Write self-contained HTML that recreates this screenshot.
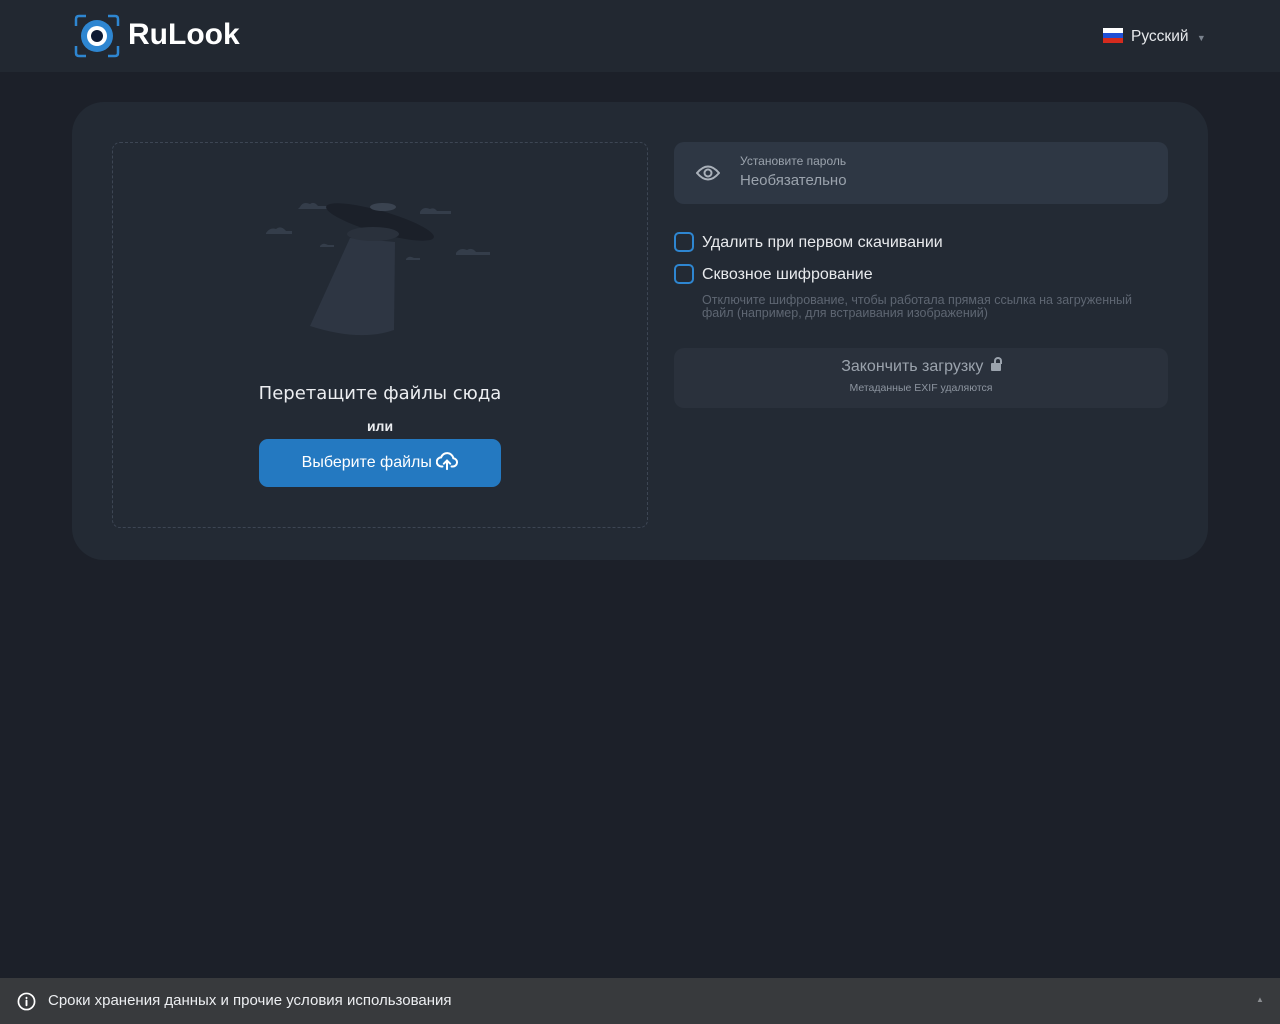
<!DOCTYPE html>
<html><head><meta charset="utf-8"><style>
*{box-sizing:border-box;margin:0;padding:0}
body{width:1280px;height:1024px;background:#1c2029;font-family:"Liberation Sans","DejaVu Sans",sans-serif;position:relative;overflow:hidden;color:#fff}
.hdr{position:absolute;left:0;top:0;width:1280px;height:72px;background:#222831}
.logo{position:absolute;left:74px;top:14px}
.brand{position:absolute;left:128px;top:18px;font-size:30px;font-weight:bold;color:#fff}
.lang{position:absolute;left:1103px;top:28px;font-size:15.5px;color:#e6e8eb}
.card{position:absolute;left:72px;top:102px;width:1136px;height:458px;background:#232a34;border-radius:32px}
.drop{position:absolute;left:112px;top:142px;width:536px;height:386px;border:1px dashed #3d4654;border-radius:8px}
.pw{position:absolute;left:674px;top:142px;width:494px;height:62px;background:#2e3744;border-radius:10px}
.cb{position:absolute;left:674px;width:20px;height:20px;border:2px solid #2e86d1;border-radius:5px}
.lbl{position:absolute;left:702px;font-size:16px;color:#e8eaed}
.fin{position:absolute;left:674px;top:348px;width:494px;height:60px;background:#2a313c;border-radius:10px;text-align:center}
.foot{position:absolute;left:0;top:978px;width:1280px;height:46px;background:#383a3d}
</style></head><body>
<div class="hdr">
 <svg class="logo" width="46" height="44" viewBox="0 0 46 44">
  <path d="M2 12V5Q2 2 5 2h7M34 2h7q3 0 3 3v7M44 32v7q0 3-3 3h-7M12 42H5q-3 0-3-3v-7" stroke="#2e86d1" stroke-width="2.5" fill="none"/>
  <circle cx="23" cy="22" r="16" fill="#2e86d1"/><circle cx="23" cy="22" r="10" fill="#fff"/><circle cx="23" cy="22" r="6" fill="#0e1a33"/>
 </svg>
 <div class="brand">RuLook</div>
 <div class="lang"><span style="display:inline-block;width:20px;height:15px;vertical-align:-2px;margin-right:8px;background:linear-gradient(#fff 0 33%,#1f4fd6 33% 66%,#d52b1e 66%)"></span>Русский <span style="color:#7a828d;font-size:9px;margin-left:4px">▼</span></div>
</div>
<div class="card"></div>
<div class="drop">
 <svg style="position:absolute;left:137px;top:47px" width="240" height="150" viewBox="250 190 240 150">
  <g fill="#343d4a">
   <path d="M300 207q3-6 10-3 4-3 8 2h10v3h-30z"/><path d="M266 233q4-6 10-4 5-4 10 2h6v3h-26z"/>
   <path d="M420 212q3-6 10-3 4-2 7 2h14v3h-31z"/><path d="M456 253q4-6 11-3 5-3 9 2h19v3h-39z"/>
   <path d="M320 246q3-4 8-1h6v2h-14z"/><path d="M406 259q3-4 8-1h6v2h-14z"/>
  </g>
  <path d="M350 238L395 242L394 330Q360 342 310 326Z" fill="#2e3643"/>
  <ellipse cx="380" cy="222" rx="56" ry="11" transform="rotate(16 380 222)" fill="#1b2029"/>
  <ellipse cx="373" cy="234" rx="26" ry="7" fill="#2a313c"/>
  <ellipse cx="383" cy="207" rx="13" ry="4" fill="#3a4350"/>
 </svg>
 <div style="position:absolute;left:0;width:534px;top:240px;text-align:center;font-family:'DejaVu Sans',sans-serif;font-size:18px;color:#eceef1">Перетащите файлы сюда</div>
 <div style="position:absolute;left:0;width:534px;top:275px;text-align:center;font-size:14px;font-weight:bold;color:#eceef1">или</div>
 <div style="position:absolute;left:146px;top:296px;width:242px;height:48px;background:#2479c1;border-radius:9px;text-align:center;line-height:48px;font-size:16px;color:#fff">Выберите файлы
  <svg width="22" height="20" viewBox="0 0 24 22" style="vertical-align:-4px"><path d="M7 17H6a5 5 0 0 1-.5-10A7 7 0 0 1 19 8a4.5 4.5 0 0 1-1 9h-1M12 20v-9M8.5 14l3.5-3.5 3.5 3.5" stroke="#fff" stroke-width="2.2" fill="none" stroke-linecap="round"/></svg></div>
</div>
<div class="pw">
 <svg style="position:absolute;left:22px;top:21px" width="24" height="20" viewBox="0 0 24 20"><path d="M1 10Q12-3 23 10Q12 23 1 10Z" stroke="#aab1ba" stroke-width="2" fill="none"/><circle cx="12" cy="10" r="3.5" stroke="#aab1ba" stroke-width="2" fill="none"/></svg>
 <div style="position:absolute;left:66px;top:12px;font-size:12px;color:#9ba3ad">Установите пароль</div>
 <div style="position:absolute;left:66px;top:30px;font-size:15px;color:#9ba3ad">Необязательно</div>
</div>
<div class="cb" style="top:232px"></div><div class="lbl" style="top:234px">Удалить при первом скачивании</div>
<div class="cb" style="top:264px"></div><div class="lbl" style="top:266px">Сквозное шифрование</div>
<div style="position:absolute;left:702px;top:294px;width:440px;font-size:12.5px;line-height:13px;color:#5e6672">Отключите шифрование, чтобы работала прямая ссылка на загруженный файл (например, для встраивания изображений)</div>
<div class="fin">
 <div style="margin-top:10px;font-size:16px;color:#9ba3ad">Закончить загрузку <span style="display:inline-block;width:10px;height:8px;background:#9ba3ad;border-radius:1px;position:relative;margin-left:3px"><span style="position:absolute;left:3px;top:-6px;width:8px;height:7px;border:2px solid #9ba3ad;border-bottom:none;border-radius:4px 4px 0 0"></span></span></div>
 <div style="margin-top:6px;font-size:10.5px;color:#8d95a0">Метаданные EXIF удаляются</div>
</div>
<div class="foot">
 <svg style="position:absolute;left:17px;top:14px" width="19" height="19" viewBox="0 0 20 20"><circle cx="10" cy="10" r="8.5" stroke="#fff" stroke-width="1.8" fill="none"/><path d="M10 9v5M10 6v.5" stroke="#fff" stroke-width="2" stroke-linecap="round"/></svg>
 <div style="position:absolute;left:48px;top:14px;font-size:15px;color:#eceef1">Сроки хранения данных и прочие условия использования</div>
 <div style="position:absolute;left:1256px;top:17px;font-size:8px;color:#8a8d91">▲</div>
</div>
</body></html>
